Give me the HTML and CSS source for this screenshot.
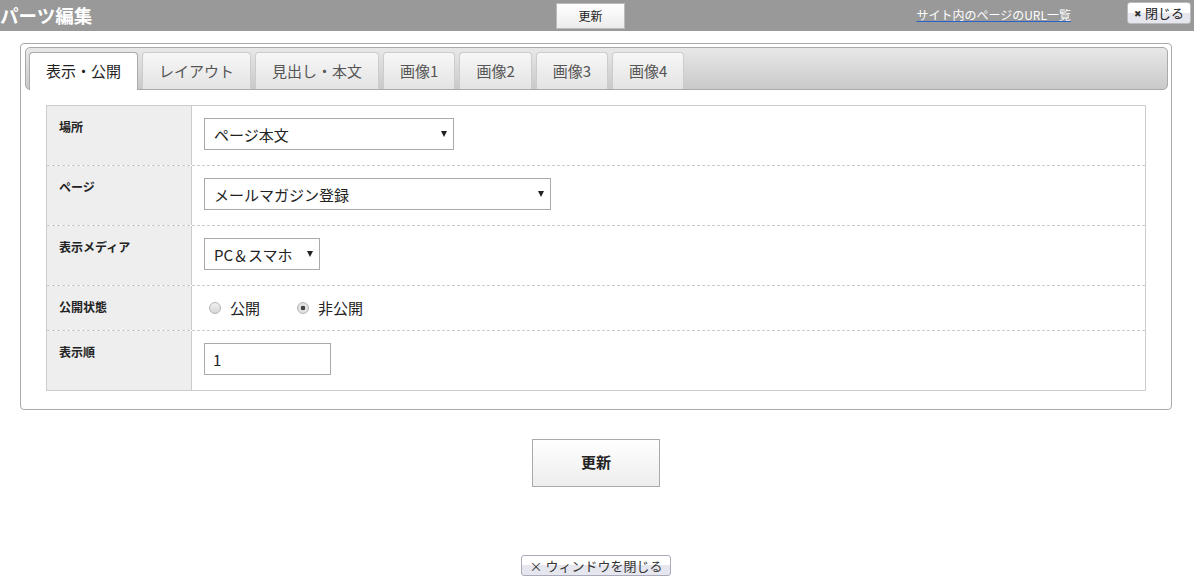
FILE: index.html
```html
<!DOCTYPE html>
<html lang="ja">

<head>
    <meta charset="UTF-8">
    <title>パーツ編集</title>
    <link rel="stylesheet" href="styles.css">
</head>

<body>

    <!-- Header -->
    <div class="header">
        <h1>パーツ編集</h1>
        <button class="head-update">更新</button>
        <a href="#" class="url-link">サイト内のページのURL一覧</a>
        <button class="close-btn"><span class="close-x">✖</span> 閉じる</button>
    </div>

    <!-- Edit Panel -->
    <div class="panel">
        <ul class="tabs">
            <li class="active">表示・公開</li>
            <li>レイアウト</li>
            <li>見出し・本文</li>
            <li>画像1</li>
            <li>画像2</li>
            <li>画像3</li>
            <li>画像4</li>
        </ul>

        <div class="form-table">
            <div class="form-row">
                <div class="form-label">場所</div>
                <div class="form-value">
                    <span class="select-wrap">
                        <select class="sel-place">
                            <option>ページ本文</option>
                        </select>
                    </span>
                </div>
            </div>
            <div class="form-row">
                <div class="form-label">ページ</div>
                <div class="form-value">
                    <span class="select-wrap">
                        <select class="sel-page">
                            <option>メールマガジン登録</option>
                        </select>
                    </span>
                </div>
            </div>
            <div class="form-row">
                <div class="form-label">表示メディア</div>
                <div class="form-value">
                    <span class="select-wrap">
                        <select class="sel-media">
                            <option>PC＆スマホ</option>
                        </select>
                    </span>
                </div>
            </div>
            <div class="form-row">
                <div class="form-label">公開状態</div>
                <div class="form-value radio-cell">
                    <label class="radio"><input type="radio" name="status">公開</label>
                    <label class="radio"><input type="radio" name="status" checked>非公開</label>
                </div>
            </div>
            <div class="form-row">
                <div class="form-label">表示順</div>
                <div class="form-value">
                    <input type="text" class="order-input" value="1">
                </div>
            </div>
        </div>
    </div>

    <!-- Submit -->
    <div class="submit-area">
        <button class="submit-btn">更新</button>
        <button class="window-close">× ウィンドウを閉じる</button>
    </div>

</body>

</html>
```

FILE: styles.css
```css
/* Global Styles */
body {
    margin: 0;
    font-family: "Noto Sans CJK JP", sans-serif;
    color: #222;
    background: #fff;
}

button {
    font-family: inherit;
    color: #222;
    cursor: pointer;
}

/* Header */
.header {
    display: flex;
    align-items: center;
    height: 31px;
    background: #999;
}

.header h1 {
    margin: 0;
    width: 93px;
    font-size: 18.5px;
    line-height: 31px;
    color: #fff;
    white-space: nowrap;
}

.head-update {
    margin-left: 463px;
    width: 69px;
    height: 26px;
    padding: 0;
    border: 1px solid #bbb;
    background: linear-gradient(#fff, #ececec);
    font-size: 12px;
}

.url-link {
    margin-left: auto;
    margin-top: -2px;
    font-size: 12px;
    color: #fff;
    text-decoration: underline;
    text-decoration-color: #2a62c9;
}

.close-btn {
    align-self: flex-start;
    margin: 2px 3px 0 56px;
    width: 64px;
    height: 22px;
    padding: 0;
    border: 1px solid #bbb;
    border-radius: 3px;
    background: linear-gradient(#fff 50%, #e6e6ee 50%);
    font-size: 13px;
    line-height: 20px;
}

.close-x {
    font-size: 9px;
    color: #333;
    vertical-align: 1px;
}

/* Panel */
.panel {
    margin: 12px 22px 0 20px;
    padding: 3px 3px 18px 4px;
    border: 1px solid #aaa;
    border-radius: 4px;
}

/* Tabs */
.tabs {
    display: flex;
    align-items: flex-end;
    gap: 4px;
    height: 37px;
    margin: 0;
    padding: 4px 0 0 3px;
    list-style: none;
    border: 1px solid #aaa;
    border-radius: 5px;
    background: linear-gradient(#e8e8e8, #c9c9c9);
}

.tabs li {
    box-sizing: border-box;
    height: 37px;
    padding: 0 16px;
    font-size: 15px;
    line-height: 36px;
    color: #555;
    border: 1px solid #ccc;
    border-bottom: none;
    border-radius: 4px 4px 0 0;
    background: linear-gradient(#f7f7f7, #e3e3e3);
    white-space: nowrap;
}

.tabs li.active {
    height: 38px;
    margin-bottom: -1px;
    color: #222;
    border-color: #aaa;
    background: #fff;
}

/* Form Table */
.form-table {
    margin: 15px 22px 0 21px;
    border: 1px solid #ccc;
}

.form-row {
    display: flex;
}

.form-row + .form-row {
    border-top: 1px dashed #ccc;
}

.form-label {
    box-sizing: border-box;
    width: 145px;
    flex-shrink: 0;
    padding: 12px;
    background: #eee;
    border-right: 1px solid #ccc;
    font-size: 12px;
    font-weight: bold;
    line-height: 17px;
}

.form-value {
    flex: 1;
    padding: 12px 12px 15px;
}

.select-wrap {
    position: relative;
    display: inline-block;
    vertical-align: top;
}

.select-wrap::after {
    content: "";
    position: absolute;
    right: 7px;
    top: 13px;
    border-left: 3px solid transparent;
    border-right: 3px solid transparent;
    border-top: 6px solid #222;
    pointer-events: none;
}

.select-wrap select {
    box-sizing: border-box;
    display: block;
    height: 32px;
    padding: 0 20px 0 9px;
    border: 1px solid #aaa;
    border-radius: 0;
    background: #fff;
    font-family: inherit;
    font-size: 15px;
    color: #222;
    appearance: none;
    -webkit-appearance: none;
}

.sel-place {
    width: 250px;
}

.sel-page {
    width: 347px;
}

.sel-media {
    width: 116px;
}

.order-input {
    box-sizing: border-box;
    display: block;
    width: 127px;
    height: 32px;
    padding: 0 8px;
    border: 1px solid #aaa;
    font-family: inherit;
    font-size: 15px;
    color: #222;
}

/* Radio Buttons */
.radio-cell {
    display: flex;
    padding-top: 13px;
    padding-bottom: 14px;
}

.radio {
    display: inline-flex;
    align-items: center;
    gap: 9px;
    margin: 0 37px 0 5px;
    font-size: 15px;
    line-height: 17px;
}

.radio + .radio {
    margin-left: 0;
}

.radio input {
    appearance: none;
    -webkit-appearance: none;
    width: 12px;
    height: 12px;
    margin: 0;
    border: 1px solid #b4b4b4;
    border-radius: 50%;
    background: linear-gradient(#f0f0f0, #d8d8d8);
}

.radio input:checked {
    background: radial-gradient(circle, #444 0 2px, #e2e2e2 2.6px);
}

/* Submit Area */
.submit-area {
    display: flex;
    flex-direction: column;
    align-items: center;
    margin: 0 22px 0 20px;
}

.submit-btn {
    margin-top: 29px;
    width: 128px;
    height: 48px;
    padding-bottom: 4px;
    border: 1px solid #aaa;
    background: linear-gradient(#fff, #ededed);
    font-size: 15px;
    font-weight: bold;
}

.window-close {
    margin-top: 68px;
    width: 150px;
    height: 21px;
    padding: 0;
    border: 1px solid #aab;
    border-radius: 3px;
    background: linear-gradient(#fff 50%, #e6e6ee 50%);
    font-size: 13px;
    line-height: 18px;
    color: #333;
}
```
